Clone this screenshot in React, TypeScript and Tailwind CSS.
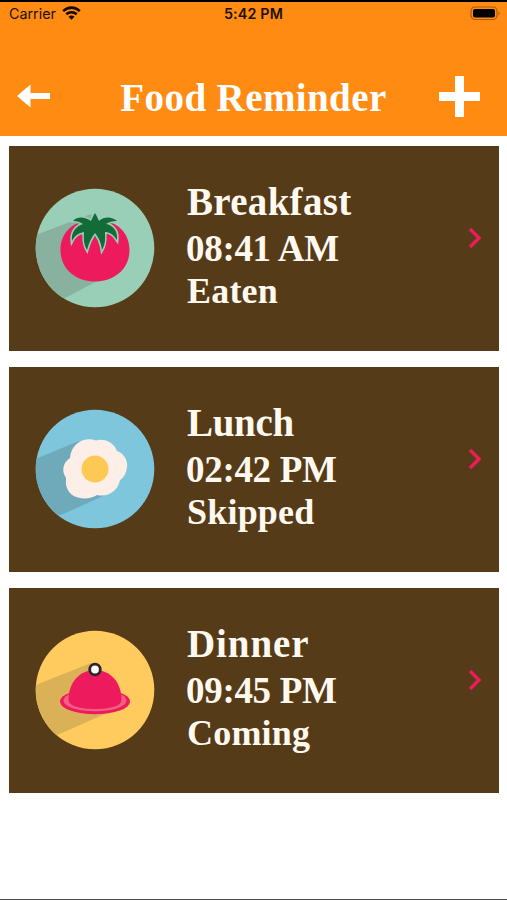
import React from "react";

const SERIF = "font-['Liberation_Serif',serif] font-bold";

function TomatoIcon() {
  return (
    <svg width="120" height="120" viewBox="0 0 120 120">
      <clipPath id="tomatoDisc"><circle cx="60" cy="60" r="59.3" /></clipPath>
      <circle cx="60" cy="60" r="59.3" fill="#98cfb6" />
      <path clipPath="url(#tomatoDisc)" d="M-2 48L56 26L80 80L64 92L30 110L-2 112Z" fill="#88b29f" />
      <path d="M60 33C82 31 94.500 45 94.500 62C94.500 82 78 93.500 60 93.500C42 93.500 25.500 82 25.500 62C25.500 45 38 31 60 33Z" fill="#ed1a5d" />
      <path d="M60 25C62 28 63 31 64 33C70 28 77 29 82 33C77 33 74 34 71 36C78 37 83 43 82 52C78 46 74 44 70 44C70 50 71 55 67 62C66 55 64 50 60 45C56 50 54 55 52 62C48 55 49 50 49 44C44 45 40 47 37 53C36 44 41 38 48 36C45 34 42 33 38 33C43 28 50 29 56 33C57 31 58 28 60 25Z" fill="#136b38" stroke="#98cfb6" strokeWidth="3.200" paintOrder="stroke" />
    </svg>
  );
}

function EggIcon() {
  return (
    <svg width="120" height="120" viewBox="0 0 120 120">
      <clipPath id="eggDisc"><circle cx="60" cy="60" r="59.3" /></clipPath>
      <circle cx="60" cy="60" r="59.3" fill="#7dc6dc" />
      <path clipPath="url(#eggDisc)" d="M-2 51L44 32L78 80L66 88L26 106L-2 112Z" fill="#6faabb" />
      <path d="M61 31.500C70 29 79 34 82 42C90 45 94 53 91.500 61C90.500 66 87 70 85 71C83 82 73 88.500 62 86C53 92 36 90.500 32 79C30.500 76 31 72 31 69C26.500 62 27.500 54 35 49C36 35 49 27 61 31.500Z" fill="#fdefe8" />
      <circle cx="60" cy="60" r="13.5" fill="#fdc955" />
    </svg>
  );
}

function ClocheIcon() {
  return (
    <svg width="120" height="120" viewBox="0 0 120 120">
      <clipPath id="clocheDisc"><circle cx="60" cy="60" r="59.3" /></clipPath>
      <circle cx="60" cy="60" r="59.3" fill="#ffca5e" />
      <path clipPath="url(#clocheDisc)" d="M-2 56L56 33L92 74L70 84L20 106L-2 112Z" fill="#dbb157" />
      <ellipse cx="60" cy="71.500" rx="35" ry="12.800" fill="#ed1a5d" />
      <ellipse cx="60" cy="70.500" rx="31.500" ry="10.800" fill="#f26080" />
      <path d="M33.500 70C33.500 52 45 40 60 40C75 40 86.500 52 86.500 70C86.500 76 75 79 60 79C45 79 33.500 76 33.500 70Z" fill="#ed1a5d" />
      <circle cx="60" cy="39.500" r="5.300" fill="#fff" stroke="#2c2524" strokeWidth="2.800" />
    </svg>
  );
}

const meals = [
  { name: "Breakfast", nameSpacing: "tracking-[0.3px]", time: "08:41 AM", state: "Eaten", Icon: TomatoIcon },
  { name: "Lunch", nameSpacing: "tracking-[-0.3px]", time: "02:42 PM", state: "Skipped", Icon: EggIcon },
  { name: "Dinner", nameSpacing: "tracking-[0.9px]", time: "09:45 PM", state: "Coming", Icon: ClocheIcon },
];

export default function App() {
  return (
    <div className="flex h-[900px] w-[507px] flex-col overflow-hidden border-b border-[#4a4a4a] bg-white">
      <header className="h-[136px] shrink-0 border-t-2 border-black bg-[#ff8b13]">
        <div className="grid h-6 grid-cols-[1fr_auto_1fr] items-center pr-[6px] pl-[9px] font-['Inter',sans-serif] text-[14.3px] text-[#1c1003]">
          <div className="flex items-center gap-[6px]">
            <span>Carrier</span>
            <svg className="-mt-[2px]" width="19" height="14" viewBox="0 0 19 14" fill="none" stroke="#120a00" strokeWidth="2.600">
              <path d="M1.200 5.100C6 .5 13 .5 17.800 5.100" />
              <path d="M4.300 8.300C7.300 5.500 11.700 5.500 14.700 8.300" />
              <path d="M6.500 10.700C8.300 9.100 10.700 9.100 12.500 10.700L9.500 13.700Z" fill="#120a00" stroke="none" />
            </svg>
          </div>
          <span className="-ml-[3px] font-semibold tracking-[0.15px]">5:42 PM</span>
          <svg className="-mt-[2px] justify-self-end" width="31" height="15" viewBox="0 0 31 15">
            <rect x="1" y="1" width="26" height="12.500" rx="4" fill="none" stroke="#a95c10" strokeWidth="1.200" />
            <rect x="3" y="3" width="22" height="8.500" rx="2" fill="#000" />
            <path d="M28.500 5V9.500Q31 7.300 28.500 5Z" fill="#a95c10" />
          </svg>
        </div>
        <div className="flex h-[110px] items-center justify-between pt-[32px] pr-[27px] pb-[1px] pl-[17px]">
          <svg className="mb-[1px]" width="33" height="24" viewBox="0 0 33 24" fill="#fff">
            <path d="M0 12L13.500 .5V9H33V15H13.500V23.500Z" />
          </svg>
          <h1 className={`${SERIF} mt-[2px] ml-[18px] text-[39px] leading-[46px] tracking-[0.4px] text-white`}>Food Reminder</h1>
          <svg width="41" height="41" viewBox="0 0 41 41" fill="#fff">
            <path d="M16 0H25V16H41V25H25V41H16V25H0V16H16Z" />
          </svg>
        </div>
      </header>
      <main className="flex flex-col gap-4 pt-[10px] pr-[8px] pl-[9px]">
        {meals.map(({ name, nameSpacing, time, state, Icon }) => (
          <article key={name} className="flex h-[205px] items-start bg-[#563b19] pl-[26px] text-[#fff9f0]">
            <div className="mt-[41.500px] shrink-0"><Icon /></div>
            <div className={`${SERIF} ml-[32px] flex-1 pt-[33px] whitespace-nowrap`}>
              <h2 className={`text-[39px] leading-[46px] ${nameSpacing}`}>{name}</h2>
              <p className="-ml-px text-[37px] leading-[48px] tracking-[-0.3px]">{time}</p>
              <p className="text-[36px] leading-[36px] tracking-[0.2px]">{state}</p>
            </div>
            <svg className="mt-[81px] mr-[16px]" width="16" height="22" viewBox="0 0 16 22" fill="none" stroke="#e91e56" strokeWidth="3.500">
              <path d="M3 2L12 11L3 20" />
            </svg>
          </article>
        ))}
      </main>
    </div>
  );
}
